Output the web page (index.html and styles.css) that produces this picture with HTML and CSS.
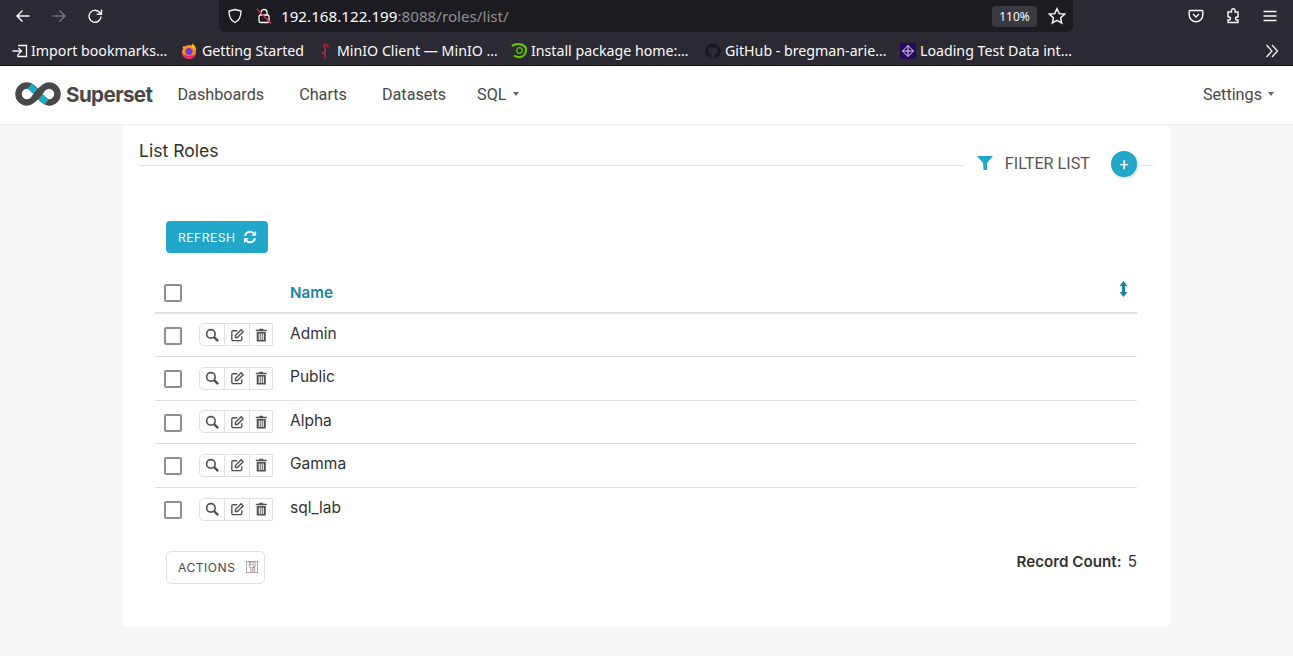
FILE: index.html
```html
<!DOCTYPE html>
<html lang="en">
<head>
    <meta charset="UTF-8">
    <meta name="viewport" content="width=device-width, initial-scale=1.0">
    <title>List Roles</title>
    <link rel="stylesheet" href="styles.css">
</head>
<body>
    <!-- browser toolbar -->
    <div class="toolbar">
        <div class="nav-btns">
            <svg class="tool-icon" viewBox="0 0 16 16"><path d="M14.5 8H2M7.5 2.5 2 8l5.5 5.5"/></svg>
            <svg class="tool-icon dim" viewBox="0 0 16 16"><path d="M1.5 8H14M8.500 2.500 14 8l-5.500 5.500"/></svg>
            <svg class="tool-icon" viewBox="0 0 16 16"><path d="M14 8.500a6 6 0 1 1-1.800-4.500L14.300 6M14.500 1.500V6.200H9.800"/></svg>
        </div>
        <div class="urlbar">
            <svg class="url-icon" viewBox="0 0 16 16"><path d="M8 1.500 14 3c0 6-1.500 9.500-6 11.500C3.500 12.500 2 9 2 3z"/></svg>
            <svg class="url-icon lock" viewBox="0 0 16 16"><rect x="3" y="7" width="10" height="7.500" rx="1.500"/><path d="M5 7V4.500a3 3 0 0 1 6 0V7"/><path class="slash" d="M1 1l14 14.500"/></svg>
            <span class="url-text">192.168.122.199<span class="url-rest">:8088/roles/list/</span></span>
            <span class="zoom-pill">110%</span>
            <svg class="url-icon star" viewBox="0 0 16 16"><path d="M8 1.500l2 4.400 4.800.5-3.600 3.200 1 4.700L8 11.900l-4.200 2.400 1-4.700L1.200 6.400 6 5.900z"/></svg>
        </div>
        <div class="tool-right">
            <svg class="tool-icon" viewBox="0 0 16 16"><path d="M2 2.500h12a.8.8 0 0 1 .8.800V7A6.800 6.800 0 0 1 1.200 7V3.300A.8.8 0 0 1 2 2.500z"/><path d="M5 6 8 9l3-3"/></svg>
            <svg class="tool-icon" viewBox="0 0 16 16"><path d="M6.500 4V2.500a1.800 1.800 0 0 1 3.600 0V4H13v5h-1a1.500 1.500 0 0 0 0 3h1v2.500H3V12h1a1.500 1.500 0 0 0 0-3H3V4z"/></svg>
            <svg class="tool-icon" viewBox="0 0 16 16"><path d="M1.500 3.500h13M1.500 8h13M1.500 12.500h13"/></svg>
        </div>
    </div>
    <!-- bookmarks -->
    <div class="bookmarks">
        <div class="bm bm-import">
            <svg class="fav line" viewBox="0 0 16 16"><path d="M6 2.500h8.500v11H6V11M.5 8h9M6.500 5l3 3-3 3"/></svg>
            Import bookmarks…
        </div>
        <div class="bm bm-start">
            <svg class="fav" viewBox="0 0 16 16"><circle cx="8" cy="9" r="7" fill="#ff8a1f"/><path d="M11 .5c.5 2-1 2.500-2 3.500 3 0 5 1.500 6 4 .5-3-1-6-4-7.500zM1.500 5 3 2.500 4 5z" fill="#ffc21f"/><path d="M1.200 10.500a7 7 0 0 0 13.600 0c-2 2.500-9 3.500-13.600 0z" fill="#f0246f"/><circle cx="8" cy="8.500" r="3.600" fill="#6b3dd6"/></svg>
            Getting Started
        </div>
        <div class="bm bm-minio">
            <svg class="fav" viewBox="0 0 16 16"><path d="M9 1.500C7 1 6 3 7.500 4.500c1.500 1.500 1.500 3-.5 4.500L5 10.500l3-1V16M9 1.500l2 1.800-2-.3" fill="none" stroke="#b52a45" stroke-width="1.300"/></svg>
            MinIO Client — MinIO …
        </div>
        <div class="bm bm-suse">
            <svg class="fav" viewBox="0 0 16 16"><path d="M1 3C4 .8 9.500.5 12.500 2.500c2.500 1.500 3 4.500 2 7-1 3-4 5-7.500 4.500-2.500-.3-4-1.500-4-1.500" fill="none" stroke="#5fc400" stroke-width="2.200"/><circle cx="8.500" cy="7.500" r="2.800" fill="none" stroke="#5fc400" stroke-width="1.300"/></svg>
            Install package home:…
        </div>
        <div class="bm bm-git">
            <svg class="fav" viewBox="0 0 16 16"><path fill="#17161c" d="M8 .5a7.700 7.700 0 0 0-2.400 15c.4 0 .5-.2.5-.4v-1.400c-2.100.5-2.600-1-2.600-1-.3-.9-.8-1.100-.8-1.100-.7-.5 0-.5 0-.5.800 0 1.200.8 1.200.8.700 1.200 1.800.9 2.200.7 0-.5.300-.9.500-1.100-1.700-.2-3.500-.9-3.500-3.800 0-.8.300-1.500.8-2-.1-.2-.3-1 .1-2 0 0 .6-.2 2.100.8a7 7 0 0 1 3.800 0c1.500-1 2.100-.8 2.100-.8.400 1 .2 1.800.1 2 .5.500.8 1.200.8 2 0 3-1.800 3.600-3.500 3.800.3.200.5.700.5 1.400v2.100c0 .2.100.4.500.4A7.700 7.700 0 0 0 8 .5z"/></svg>
            GitHub - bregman-arie…
        </div>
        <div class="bm bm-load">
            <svg class="fav" viewBox="0 0 16 16"><rect width="16" height="16" fill="#260a5e"/><path d="M8 2.500 13.500 8 8 13.500 2.500 8zM8 2.500v11M2.500 8h11" fill="none" stroke="#e0d5ff" stroke-width="1"/></svg>
            Loading Test Data int…
        </div>
        <svg class="bm-more" viewBox="0 0 16 16"><path d="M2.500 2 8 8l-5.500 6M8 2l5.500 6L8 14"/></svg>
    </div>

    <!-- app navbar -->
    <nav class="navbar">
        <svg class="logo" viewBox="0 0 46 24">
            <path class="logo-dark" d="M23 12C19.500 7 16.500 3.500 12 3.500a8.500 8.500 0 0 0 0 17c4.500 0 7.500-3.500 11-8.500s6.500-8.500 11-8.500a8.500 8.500 0 0 1 0 17c-4.500 0-7.500-3.500-11-8.500z"/>
            <path class="logo-blue" d="M14.500 4 20.500 9.500"/>
            <path class="logo-blue" d="M25.500 14.500 31.500 20"/>
            <path class="logo-dark" d="M19 16.500 27 7.500"/>
        </svg>
        <span class="brand">Superset</span>
        <a class="nav-link">Dashboards</a>
        <a class="nav-link">Charts</a>
        <a class="nav-link nav-data">Datasets</a>
        <a class="nav-link">SQL<i class="caret"></i></a>
        <a class="nav-link settings">Settings<i class="caret"></i></a>
    </nav>

    <main class="content">
        <section class="card">
            <div class="card-head">
                <h1 class="title">List Roles</h1>
                <div class="filter">
                    <svg class="filter-icon" viewBox="0 0 16 14"><path d="M0 0h16L10 7v7H6.500L6 7z"/></svg>
                    <span class="filter-text">FILTER LIST</span>
                    <span class="add-btn">+</span>
                </div>
                <div class="head-stub"></div>
            </div>

            <button class="btn-refresh">REFRESH
                <svg class="refresh-icon" viewBox="0 0 16 16"><path d="M15 1v5.500H9.500l2-2A4.700 4.700 0 0 0 3.600 6.600H1.200A7 7 0 0 1 13 3zM1 15V9.500h5.500l-2 2a4.700 4.700 0 0 0 7.900-2.100h2.400A7 7 0 0 1 3 13z"/></svg>
            </button>

            <div class="list">
                <div class="row head">
                    <span class="check"></span>
                    <span class="name col-name">Name</span>
                    <svg class="sort" viewBox="0 0 8 16"><path d="M4 0 8 5H5.500v6H8l-4 5-4-5h2.500V5H0z"/></svg>
                </div>
                <div class="row">
                    <span class="check"></span>
                    <div class="acts">
                        <span class="act"><svg viewBox="0 0 16 16"><circle cx="6.500" cy="6.500" r="4.700" class="ln"/><path class="ln thick" d="M10 10l4.500 4.500"/></svg></span>
                        <span class="act"><svg viewBox="0 0 16 16"><path class="ln" d="M13 9v3.500a1.500 1.500 0 0 1-1.500 1.500h-8A1.500 1.500 0 0 1 2 12.500v-8A1.500 1.500 0 0 1 3.500 3H8"/><path class="ln" d="M6 10.500V8.300L12.300 2l2.200 2.200-6.300 6.300z"/></svg></span>
                        <span class="act"><svg viewBox="0 0 16 16"><path class="fl" d="M5.500 2 6.300.8h3.400L10.500 2H14v1.600H2V2zM3 4.500h10V15H3zM5.200 6.200v7h1.200v-7zm2.200 0v7h1.200v-7zm2.200 0v7h1.200v-7z" fill-rule="evenodd"/></svg></span>
                    </div>
                    <span class="name">Admin</span>
                </div>
                <div class="row">
                    <span class="check"></span>
                    <div class="acts">
                        <span class="act"><svg viewBox="0 0 16 16"><circle cx="6.500" cy="6.500" r="4.700" class="ln"/><path class="ln thick" d="M10 10l4.500 4.500"/></svg></span>
                        <span class="act"><svg viewBox="0 0 16 16"><path class="ln" d="M13 9v3.500a1.500 1.500 0 0 1-1.500 1.500h-8A1.500 1.500 0 0 1 2 12.500v-8A1.500 1.500 0 0 1 3.500 3H8"/><path class="ln" d="M6 10.500V8.300L12.300 2l2.200 2.200-6.300 6.300z"/></svg></span>
                        <span class="act"><svg viewBox="0 0 16 16"><path class="fl" d="M5.500 2 6.300.8h3.400L10.500 2H14v1.600H2V2zM3 4.500h10V15H3zM5.200 6.200v7h1.200v-7zm2.200 0v7h1.200v-7zm2.200 0v7h1.200v-7z" fill-rule="evenodd"/></svg></span>
                    </div>
                    <span class="name">Public</span>
                </div>
                <div class="row">
                    <span class="check"></span>
                    <div class="acts">
                        <span class="act"><svg viewBox="0 0 16 16"><circle cx="6.500" cy="6.500" r="4.700" class="ln"/><path class="ln thick" d="M10 10l4.500 4.500"/></svg></span>
                        <span class="act"><svg viewBox="0 0 16 16"><path class="ln" d="M13 9v3.500a1.500 1.500 0 0 1-1.500 1.500h-8A1.500 1.500 0 0 1 2 12.500v-8A1.500 1.500 0 0 1 3.500 3H8"/><path class="ln" d="M6 10.500V8.300L12.300 2l2.200 2.200-6.300 6.300z"/></svg></span>
                        <span class="act"><svg viewBox="0 0 16 16"><path class="fl" d="M5.500 2 6.300.8h3.400L10.500 2H14v1.600H2V2zM3 4.500h10V15H3zM5.200 6.200v7h1.200v-7zm2.200 0v7h1.200v-7zm2.200 0v7h1.200v-7z" fill-rule="evenodd"/></svg></span>
                    </div>
                    <span class="name">Alpha</span>
                </div>
                <div class="row">
                    <span class="check"></span>
                    <div class="acts">
                        <span class="act"><svg viewBox="0 0 16 16"><circle cx="6.500" cy="6.500" r="4.700" class="ln"/><path class="ln thick" d="M10 10l4.500 4.500"/></svg></span>
                        <span class="act"><svg viewBox="0 0 16 16"><path class="ln" d="M13 9v3.500a1.500 1.500 0 0 1-1.500 1.500h-8A1.500 1.500 0 0 1 2 12.500v-8A1.500 1.500 0 0 1 3.500 3H8"/><path class="ln" d="M6 10.500V8.300L12.300 2l2.200 2.200-6.300 6.300z"/></svg></span>
                        <span class="act"><svg viewBox="0 0 16 16"><path class="fl" d="M5.500 2 6.300.8h3.400L10.500 2H14v1.600H2V2zM3 4.500h10V15H3zM5.200 6.200v7h1.200v-7zm2.200 0v7h1.200v-7zm2.200 0v7h1.200v-7z" fill-rule="evenodd"/></svg></span>
                    </div>
                    <span class="name">Gamma</span>
                </div>
                <div class="row">
                    <span class="check"></span>
                    <div class="acts">
                        <span class="act"><svg viewBox="0 0 16 16"><circle cx="6.500" cy="6.500" r="4.700" class="ln"/><path class="ln thick" d="M10 10l4.500 4.500"/></svg></span>
                        <span class="act"><svg viewBox="0 0 16 16"><path class="ln" d="M13 9v3.500a1.500 1.500 0 0 1-1.500 1.500h-8A1.500 1.500 0 0 1 2 12.500v-8A1.500 1.500 0 0 1 3.500 3H8"/><path class="ln" d="M6 10.500V8.300L12.300 2l2.200 2.200-6.300 6.300z"/></svg></span>
                        <span class="act"><svg viewBox="0 0 16 16"><path class="fl" d="M5.500 2 6.300.8h3.400L10.500 2H14v1.600H2V2zM3 4.500h10V15H3zM5.200 6.200v7h1.200v-7zm2.200 0v7h1.200v-7zm2.200 0v7h1.200v-7z" fill-rule="evenodd"/></svg></span>
                    </div>
                    <span class="name">sql_lab</span>
                </div>
            </div>

            <div class="card-foot">
                <button class="btn-actions">ACTIONS <span class="tofu">F0<br>18</span></button>
                <div class="count"><b>Record Count:</b> 5</div>
            </div>
        </section>
    </main>
</body>
</html>
```

FILE: styles.css
```css
*{
    box-sizing: border-box;
}
body{
    margin: 0;
    height: 656px;
    overflow: hidden;
    background-color: #f7f7f7;
    font-family: "Inter", "Liberation Sans", sans-serif;
    color: #323232;
}

/* browser toolbar */
.toolbar{
    height: 38px;
    background-color: #2b2a33;
    display: flex;
    align-items: flex-start;
    padding-left: 15px;
}
.nav-btns{
    display: flex;
    gap: 20px;
    width: 204px;
    margin-top: 8px;
}
.tool-icon{
    width: 16px;
    height: 16px;
    fill: none;
    stroke: #fbfbfe;
    stroke-width: 1.4;
    flex: none;
}
.tool-icon.dim{
    stroke: #73727a;
}
.urlbar{
    width: 854px;
    height: 32px;
    background-color: #1c1b22;
    border-radius: 0 0 6px 6px;
    display: flex;
    align-items: center;
    padding: 0 8px;
    font-family: "Noto Sans", sans-serif;
    font-size: 15.200px;
    color: #fbfbfe;
}
.url-icon{
    width: 16px;
    height: 16px;
    fill: none;
    stroke: #fbfbfe;
    stroke-width: 1.300;
    flex: none;
}
.url-icon.lock{
    margin-left: 13px;
}
.slash{
    stroke: #e22850;
}
.url-text{
    margin-left: 9px;
    flex: 1;
}
.url-rest{
    color: #8f8f93;
}
.zoom-pill{
    width: 45px;
    height: 21px;
    background-color: #3a3940;
    border-radius: 3px;
    font-size: 12px;
    display: flex;
    align-items: center;
    justify-content: center;
}
.url-icon.star{
    width: 18px;
    height: 18px;
    margin: 0 -1px 0 11px;
}
.tool-right{
    display: flex;
    gap: 21px;
    margin-left: 115px;
    margin-top: 8px;
}

/* bookmarks */
.bookmarks{
    height: 28px;
    padding-bottom: 2px;
    background-color: #2b2a33;
    border-bottom: 1px solid #0c0c0d;
    display: flex;
    align-items: center;
    font-family: "Noto Sans", sans-serif;
    font-size: 14.200px;
    color: #fbfbfe;
}
.bm{
    display: flex;
    align-items: center;
    white-space: nowrap;
    gap: 4px;
    flex: none;
}
.bm-import{ margin-left: 12px; width: 169px; gap: 3px; }
.bm-start{ width: 136px; gap: 5px; }
.bm-minio{ width: 194px; }
.bm-suse{ width: 194px; }
.bm-git{ width: 195px; }
.bm-load{ width: 200px; }
.fav{
    width: 16px;
    height: 16px;
    flex: none;
}
.fav.line{
    fill: none;
    stroke: #fbfbfe;
    stroke-width: 1.300;
}
.bm-more{
    width: 16px;
    height: 16px;
    fill: none;
    stroke: #fbfbfe;
    stroke-width: 1.200;
    margin-left: auto;
    margin-right: 13px;
}

/* navbar */
.navbar{
    height: 59px;
    padding-left: 15px;
    padding-bottom: 2px;
    background-color: #fff;
    border-bottom: 1px solid #f0f0f0;
    display: flex;
    align-items: center;
    font-family: "Roboto", "Liberation Sans", sans-serif;
    font-size: 16.200px;
    color: #484848;
}
.logo{
    width: 46px;
    height: 24px;
    fill: none;
    flex: none;
}
.logo-dark{
    stroke: #484848;
    stroke-width: 6.500;
}
.logo-blue{
    stroke: #20a7c9;
    stroke-width: 6.500;
}
.brand{
    font-family: "Inter", sans-serif;
    font-size: 20.600px;
    font-weight: 700;
    letter-spacing: -0.6px;
    margin-left: 5px;
    margin-right: 25px;
}
.nav-link{
    margin-right: 35px;
    display: flex;
    align-items: center;
}
.nav-data{
    margin-right: 31px;
}
.caret{
    width: 0;
    height: 0;
    border-left: 3.500px solid transparent;
    border-right: 3.500px solid transparent;
    border-top: 4px solid #666;
    margin-left: 6px;
}
.settings{
    margin-left: auto;
    margin-right: 19px;
}

/* card */
.content{
    padding: 1px 123px 0 122px;
}
.card{
    height: 501px;
    background-color: #fff;
    border-radius: 4px;
    padding-left: 17px;
    padding-right: 17px;
}
.card-head{
    height: 40px;
    display: flex;
    align-items: flex-start;
}
.title{
    flex: 1;
    height: 40px;
    margin: 0;
    padding-top: 14px;
    font-size: 17.600px;
    font-weight: 400;
    line-height: 22px;
    border-bottom: 1px solid #e0e0e0;
    color: #323232;
}
.filter{
    display: flex;
    align-items: center;
    height: 26px;
    margin-top: 25px;
    padding-left: 12px;
    font-family: "Roboto", sans-serif;
    font-size: 16.200px;
    color: #555;
}
.filter-icon{
    width: 16px;
    height: 14px;
    fill: #20a7c9;
    margin-bottom: 2px;
}
.filter-text{
    margin-left: 12px;
    margin-right: 21px;
    margin-bottom: 2px;
}
.add-btn{
    width: 26px;
    height: 26px;
    border-radius: 50%;
    background-color: #20a7c9;
    color: #fff;
    font-size: 16px;
    display: flex;
    align-items: center;
    justify-content: center;
    box-shadow: 1px 1px 3px rgba(0,0,0,.2);
}
.head-stub{
    width: 16px;
    height: 40px;
    border-bottom: 1px solid #e0e0e0;
}
.btn-refresh{
    display: flex;
    align-items: center;
    gap: 7px;
    width: 102px;
    height: 32px;
    margin: 55px 0 0 27px;
    padding: 0 0 0 12px;
    border: 0;
    border-radius: 4px;
    background-color: #20a7c9;
    color: #fff;
    font-family: "Inter", sans-serif;
    font-size: 12.100px;
    letter-spacing: .5px;
}
.refresh-icon{
    width: 14px;
    height: 14px;
    fill: #fff;
}

/* list */
.list{
    margin: 19px 16px 0 16px;
    width: 982px;
}
.row{
    display: flex;
    align-items: center;
    height: 43.500px;
    border-bottom: 1px solid #e0e0e0;
    padding-left: 9px;
    font-size: 15.500px;
}
.row:last-child{
    border-bottom: 0;
}
.row.head{
    height: 41.500px;
    border-bottom: 2px solid #e0e0e0;
}
.check{
    width: 18px;
    height: 18px;
    border: 2px solid #8e8b9e;
    border-radius: 2px;
    flex: none;
    margin-top: 1.500px;
}
.acts{
    display: flex;
    width: 74px;
    height: 23px;
    margin-left: 17px;
    border: 1px solid #e0e0e0;
    border-radius: 5px 0 0 5px;
    flex: none;
}
.act{
    width: 25px;
    flex: none;
    display: flex;
    align-items: center;
    justify-content: center;
    border-left: 1px solid #e0e0e0;
}
.act:first-child{
    border-left: 0;
    width: 24px;
}
.act:last-child{
    width: 23px;
}
.act svg{
    width: 14.500px;
    height: 14.500px;
}
.ln{
    fill: none;
    stroke: #505050;
    stroke-width: 1.500;
}
.ln.thick{
    stroke-width: 2.600;
}
.act circle.ln{
    stroke-width: 1.800;
}
.fl{
    fill: #505050;
}
.name{
    margin-left: 17px;
    margin-top: -3px;
}
.col-name{
    margin-left: 108px;
    margin-top: 1px;
    flex: 1;
    color: #1985a0;
    font-weight: 600;
    font-size: 15.200px;
}
.sort{
    width: 9px;
    height: 16px;
    fill: #1985a0;
    margin-right: 9px;
    margin-top: -6px;
}

/* bottom */
.card-foot{
    display: flex;
    justify-content: space-between;
    align-items: flex-start;
    margin: 19.500px 16px 0 27px;
}
.btn-actions{
    display: flex;
    align-items: center;
    gap: 11px;
    width: 99px;
    height: 33px;
    padding: 0 0 0 11px;
    background-color: #fff;
    border: 1px solid #e0e0e0;
    border-radius: 5px;
    color: #484848;
    font-family: "Inter", sans-serif;
    font-size: 12.100px;
    letter-spacing: .5px;
    white-space: nowrap;
}
.tofu{
    width: 12px;
    height: 12px;
    border: 1px solid #aaa;
    font-size: 6px;
    line-height: 5px;
    letter-spacing: 0;
    color: #666;
    text-align: center;
    flex: none;
}
.count{
    font-size: 15.200px;
    margin-top: 1px;
}
.count b{
    font-weight: 600;
    margin-right: 2px;
}
```
